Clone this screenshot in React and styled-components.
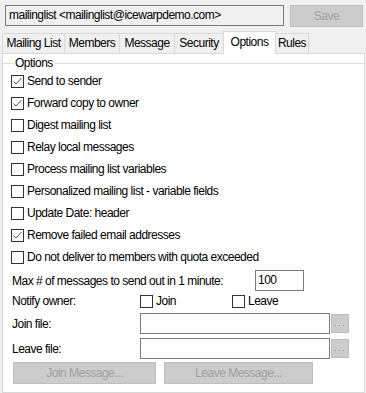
import React from "react";
import styled, { createGlobalStyle } from "styled-components";

const GlobalStyle = createGlobalStyle`
  body {
    margin: 0;
    background: #f0f0f0;
    font-family: "Liberation Sans", Arial, sans-serif;
    font-size: 12px;
    letter-spacing: -0.5px;
    color: #000;
  }
`;

const Window = styled.div`
  width: 366px;
  height: 393px;
  box-sizing: border-box;
  padding-top: 5px;
  overflow: hidden;
`;

const TopBar = styled.div`
  display: flex;
  align-items: flex-start;
  padding-left: 5px;
  gap: 6px;
`;

const NameBox = styled.div`
  width: 279px;
  height: 21px;
  box-sizing: border-box;
  border: 1px solid #7a7a7a;
  background: #f0f0f0;
  padding: 0 3px;
  line-height: 19px;
  white-space: nowrap;
`;

const GrayButton = styled.div`
  width: ${(p) => p.$w}px;
  height: ${(p) => p.$h || 22}px;
  box-sizing: border-box;
  border: 1px solid #bfbfbf;
  background: #cccccc;
  color: #a0a0a0;
  display: flex;
  align-items: center;
  justify-content: center;
`;

const TabStrip = styled.div`
  display: flex;
  align-items: flex-end;
  height: 22px;
  margin-top: 5px;
  padding-left: 2px;
`;

const Tab = styled.div`
  width: ${(p) => p.$w}px;
  height: ${(p) => (p.$active ? 23 : 21)}px;
  box-sizing: border-box;
  border: 1px solid #d9d9d9;
  border-bottom: ${(p) => (p.$active ? "none" : "1px solid #d9d9d9")};
  margin-left: -1px;
  background: ${(p) => (p.$active ? "#fff" : "#f0f0f0")};
  display: flex;
  align-items: center;
  justify-content: center;
  padding-bottom: ${(p) => (p.$active ? 3 : 1)}px;
  position: relative;
  z-index: ${(p) => (p.$active ? 2 : 1)};
  &:first-child {
    margin-left: 0;
  }
`;

const Panel = styled.div`
  margin: -1px 0 0 2px;
  width: 363px;
  height: 340px;
  box-sizing: border-box;
  border: 1px solid #d9d9d9;
  background: #fff;
  position: relative;
  z-index: 1;
`;

const Group = styled.fieldset`
  margin: 3px 0 0 0;
  padding: 1px 0 0 8px;
  border: none;
  border-top: 1px solid #dcdcdc;
`;

const Legend = styled.legend`
  padding: 0 1px;
  margin-left: 3px;
  line-height: 12px;
`;

const CheckRow = styled.label`
  display: flex;
  align-items: center;
  gap: 3px;
  height: 22px;
  white-space: nowrap;
`;

const Box = styled.span`
  width: 13px;
  height: 13px;
  box-sizing: border-box;
  border: 1px solid #333;
  background: #fff;
  display: flex;
  align-items: center;
  justify-content: center;
  flex-shrink: 0;
`;

const FormRow = styled.div`
  display: flex;
  align-items: center;
  height: ${(p) => p.$h}px;
  padding-left: 1px;
`;

const Label = styled.span`
  width: ${(p) => p.$w}px;
  flex-shrink: 0;
  white-space: nowrap;
`;

const Field = styled.div`
  width: ${(p) => p.$w}px;
  height: 21px;
  box-sizing: border-box;
  border: 1px solid #7a7a7a;
  background: #fff;
  padding: 0 2px;
  line-height: 19px;
`;

const Option = styled.label`
  display: flex;
  align-items: center;
  gap: 3px;
  width: ${(p) => p.$w}px;
`;

const Browse = styled(GrayButton)`
  margin-left: 1px;
  align-items: flex-end;
  padding-bottom: 5px;
`;

const ButtonRow = styled.div`
  display: flex;
  gap: 8px;
  margin-top: 3px;
  padding-left: 2px;
`;

const Check = ({ checked }) => (
  <Box>
    {checked && (
      <svg width="11" height="11" viewBox="0 0 11 11">
        <polyline points="1.5,5.5 4,8 9.5,2" fill="none" stroke="#555" strokeWidth="1" />
      </svg>
    )}
  </Box>
);

const Dots = () => (
  <svg width="10" height="2" viewBox="0 0 10 2">
    <rect x="0" y="0" width="1" height="1" fill="#a08c8c" />
    <rect x="4" y="0" width="1" height="1" fill="#8c8ca0" />
    <rect x="8" y="0" width="1" height="1" fill="#a08ca0" />
  </svg>
);

const options = [
  ["Send to sender", true],
  ["Forward copy to owner", true],
  ["Digest mailing list", false],
  ["Relay local messages", false],
  ["Process mailing list variables", false],
  ["Personalized mailing list - variable fields", false],
  ["Update Date: header", false],
  ["Remove failed email addresses", true],
  ["Do not deliver to members with quota exceeded", false],
];

const tabs = [
  ["Mailing List", 63],
  ["Members", 56],
  ["Message", 56],
  ["Security", 50],
  ["Options", 53, true],
  ["Rules", 34],
];

export default function App() {
  return (
    <Window>
      <GlobalStyle />
      <TopBar>
        <NameBox>mailinglist &lt;mailinglist@icewarpdemo.com&gt;</NameBox>
        <GrayButton $w={73}>Save</GrayButton>
      </TopBar>
      <TabStrip>
        {tabs.map(([name, w, active]) => (
          <Tab key={name} $w={w} $active={active}>
            {name}
          </Tab>
        ))}
      </TabStrip>
      <Panel>
        <Group>
          <Legend>Options</Legend>
          {options.map(([text, checked]) => (
            <CheckRow key={text}>
              <Check checked={checked} />
              {text}
            </CheckRow>
          ))}
          <FormRow $h={25}>
            <Label $w={243}>Max # of messages to send out in 1 minute:</Label>
            <Field $w={49}>100</Field>
          </FormRow>
          <FormRow $h={16}>
            <Label $w={128}>Notify owner:</Label>
            <Option $w={92}>
              <Check />
              Join
            </Option>
            <Option $w={60}>
              <Check />
              Leave
            </Option>
          </FormRow>
          <FormRow $h={29}>
            <Label $w={128}>Join file:</Label>
            <Field $w={190} />
            <Browse $w={18} $h={19}>
              <Dots />
            </Browse>
          </FormRow>
          <FormRow $h={21}>
            <Label $w={128}>Leave file:</Label>
            <Field $w={190} />
            <Browse $w={18} $h={19}>
              <Dots />
            </Browse>
          </FormRow>
          <ButtonRow>
            <GrayButton $w={143}>Join Message...</GrayButton>
            <GrayButton $w={149}>Leave Message...</GrayButton>
          </ButtonRow>
        </Group>
      </Panel>
    </Window>
  );
}
